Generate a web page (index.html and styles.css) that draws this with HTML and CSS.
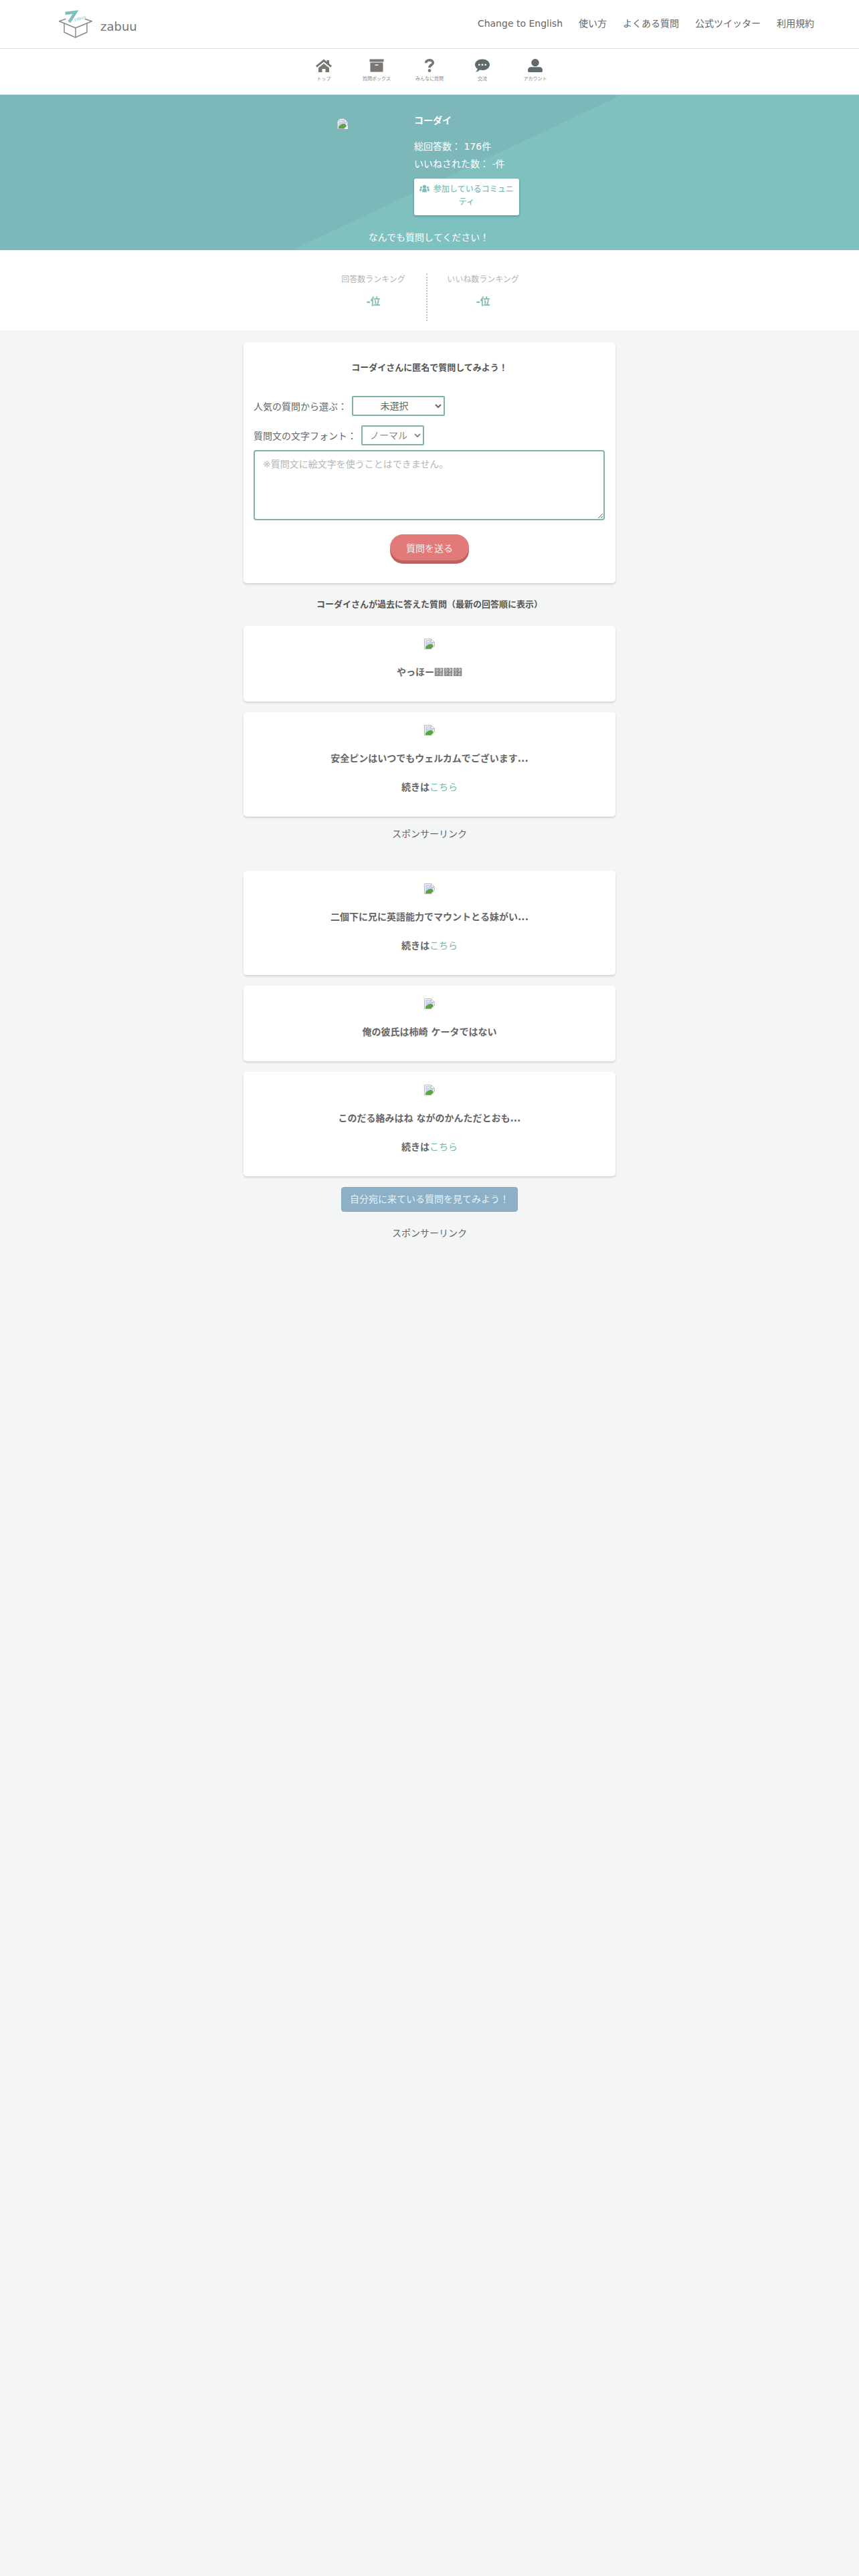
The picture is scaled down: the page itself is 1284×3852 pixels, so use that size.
FILE: index.html
```html
<!DOCTYPE html>
<html lang="ja">
<head>
    <meta charset="UTF-8">
    <meta name="viewport" content="width=device-width, initial-scale=1.0">
    <title>コーダイ | zabuu</title>
    <link rel="stylesheet" href="styles.css">
</head>
<body>
    <svg class="sprite" width="0" height="0">
        <symbol id="broken" viewBox="0 0 16 16">
            <path d="M0.5 0.5H10.5L15.5 5.5V15.5H0.5Z" fill="#fff" stroke="#bbb"/>
            <path d="M2 2H10V6H14V14H2Z" fill="#c9d5f0"/>
            <path d="M2 15V12.5C5 8.5 9 7.5 11 8L14 11L10.5 15Z" fill="#5aa63c"/>
            <path d="M4 5C5 3.6 7 3.6 8 5Z" fill="#fff"/>
            <path d="M10.5 0.5V5.5H15.5" fill="none" stroke="#bbb"/>
            <path d="M11 16L16 11V16Z" fill="#fff"/>
        </symbol>
    </svg>

    <header class="header">
        <a class="logo">
            <svg class="logo-mark" viewBox="0 0 50 44">
                <path d="M9.5 5L25 3L15.5 18" fill="none" stroke="#7cc0ba" stroke-width="4.5"/>
                <text x="23.5" y="17" class="logo-small" transform="rotate(-18 23.5 17)">zabuu</text>
                <path d="M10.3 13.3L0.5 16.7L25 26.7L49.3 16.7L38.7 13.3M8 20V33.3L24.7 41L42 33.3V20M25 26.7V41" fill="none" stroke="#8a8a8a" stroke-width="1.5" stroke-linejoin="round"/>
            </svg>
            <span class="logo-text">zabuu</span>
        </a>
        <nav class="header-links">
            <a>Change to English</a>
            <a>使い方</a>
            <a>よくある質問</a>
            <a>公式ツイッター</a>
            <a>利用規約</a>
        </nav>
    </header>

    <nav class="icon-nav">
        <a class="icon-item">
            <svg class="icon-svg" viewBox="0 0 24 20"><path fill="#7a7672" d="M12 0.5L0 10.5L1.8 12.8L12 4.6L22.2 12.8L24 10.5L20 7.2V2H16.5V4.3Z"/><path fill="#7a7672" d="M4 13.6L12 7L20 13.6V20H14.5V15H9.5V20H4Z"/></svg>
            <span>トップ</span>
        </a>
        <a class="icon-item">
            <svg class="icon-svg" viewBox="0 0 24 20"><path fill="#7a7672" d="M1.5 0.5H22.5V4.5H1.5ZM2.5 5.5H21.5V19.5H2.5Z"/><rect x="9.5" y="8.5" width="5" height="1.5" fill="#fff"/></svg>
            <span>質問ボックス</span>
        </a>
        <a class="icon-item">
            <svg class="icon-svg" viewBox="0 0 24 20"><path fill="none" stroke="#7a7672" stroke-width="3.8" d="M6.8 6.2C6.8 3.4 9 1.9 12 1.9C15 1.9 17.2 3.4 17.2 5.9C17.2 9.2 12 9.2 12 13.2"/><circle cx="12" cy="17.6" r="2.4" fill="#7a7672"/></svg>
            <span>みんなに質問</span>
        </a>
        <a class="icon-item">
            <svg class="icon-svg" viewBox="0 0 24 20"><path fill="#5f6a6e" d="M12 0.5C18 0.5 23 4 23 8.7C23 13.4 18 17 12 17C10.8 17 9.6 16.8 8.6 16.5C7 18 4.6 19.5 2 19.5C3.6 18 4.6 16.2 4.8 15C2.5 13.4 1 11.2 1 8.7C1 4 6 0.5 12 0.5Z"/><circle cx="7.3" cy="8.8" r="1.4" fill="#fff"/><circle cx="12" cy="8.8" r="1.4" fill="#fff"/><circle cx="16.7" cy="8.8" r="1.4" fill="#fff"/></svg>
            <span>交流</span>
        </a>
        <a class="icon-item">
            <svg class="icon-svg" viewBox="0 0 24 20"><circle cx="12" cy="5.7" r="5.7" fill="#5f6a6e"/><path fill="#5f6a6e" d="M5.5 12.2H18.5C21 12.2 23 14.2 23 16.7V18C23 19 22.2 20 21 20H3C1.8 20 1 19 1 18V16.7C1 14.2 3 12.2 5.5 12.2Z"/></svg>
            <span>アカウント</span>
        </a>
    </nav>

    <section class="hero">
        <div class="hero-inner">
            <svg class="hero-avatar"><use href="#broken"/></svg>
            <div class="hero-info">
                <div class="hero-name">コーダイ</div>
                <div class="hero-stats">
                    <p>総回答数： 176件</p>
                    <p>いいねされた数： -件</p>
                </div>
                <a class="community-btn">
                    <svg class="community-icon" viewBox="0 0 16 13">
                        <circle cx="8" cy="3.4" r="2.8" fill="#7fbdb8"/>
                        <path fill="#7fbdb8" d="M4.4 12.5V9.2C4.4 7.6 5.6 6.6 7 6.6H9C10.4 6.6 11.6 7.6 11.6 9.2V12.5Z"/>
                        <circle cx="2.6" cy="4.6" r="1.7" fill="#7fbdb8"/>
                        <circle cx="13.4" cy="4.6" r="1.7" fill="#7fbdb8"/>
                        <path fill="#7fbdb8" d="M0 10.5V8.6C0 7.4 0.8 6.8 2 6.8H3.6C3.2 7.4 3.2 8.2 3.2 9.2V10.5ZM16 10.5V8.6C16 7.4 15.2 6.8 14 6.8H12.4C12.8 7.4 12.8 8.2 12.8 9.2V10.5Z"/>
                    </svg>
                    参加しているコミュニティ
                </a>
            </div>
        </div>
        <p class="hero-message">なんでも質問してください！</p>
    </section>

    <section class="ranking">
        <div class="rank-col rank-col-left">
            <div class="rank-label">回答数ランキング</div>
            <div class="rank-value">-位</div>
        </div>
        <div class="rank-divider"></div>
        <div class="rank-col rank-col-right">
            <div class="rank-label">いいね数ランキング</div>
            <div class="rank-value">-位</div>
        </div>
    </section>

    <main class="main">
        <form class="card ask-card">
            <div class="ask-title">コーダイさんに匿名で質問してみよう！</div>
            <div class="ask-row">
                <label>人気の質問から選ぶ：</label>
                <select class="ask-select popular-select"><option>未選択</option></select>
            </div>
            <div class="ask-row">
                <label>質問文の文字フォント：</label>
                <select class="ask-select font-select"><option>ノーマル</option></select>
            </div>
            <textarea class="ask-text" placeholder="※質問文に絵文字を使うことはできません。"></textarea>
            <button type="button" class="send-btn">質問を送る</button>
        </form>

        <h2 class="answers-title">コーダイさんが過去に答えた質問（最新の回答順に表示）</h2>

        <div class="card answer-card">
            <svg class="answer-img"><use href="#broken"/></svg>
            <p class="answer-text">やっほー<span class="tofu">&#x378;&#x378;&#x378;</span></p>
        </div>
        <div class="card answer-card">
            <svg class="answer-img"><use href="#broken"/></svg>
            <p class="answer-text">安全ピンはいつでもウェルカムでございます...</p>
            <p class="answer-more">続きは<a>こちら</a></p>
        </div>

        <div class="sponsor sponsor-first">スポンサーリンク</div>

        <div class="card answer-card">
            <svg class="answer-img"><use href="#broken"/></svg>
            <p class="answer-text">二個下に兄に英語能力でマウントとる妹がい...</p>
            <p class="answer-more">続きは<a>こちら</a></p>
        </div>
        <div class="card answer-card">
            <svg class="answer-img"><use href="#broken"/></svg>
            <p class="answer-text">俺の彼氏は柿崎 ケータではない</p>
        </div>
        <div class="card answer-card">
            <svg class="answer-img"><use href="#broken"/></svg>
            <p class="answer-text">このだる絡みはね ながのかんただとおも...</p>
            <p class="answer-more">続きは<a>こちら</a></p>
        </div>

        <a class="inbox-btn">自分宛に来ている質問を見てみよう！</a>
        <div class="sponsor">スポンサーリンク</div>
    </main>
</body>
</html>
```

FILE: styles.css
```css
* {
    margin: 0;
    padding: 0;
    box-sizing: border-box;
}
body {
    background: #f4f6f6;
    color: #666;
    font-family: "DejaVu Sans", "Noto Sans CJK JP", sans-serif;
    font-size: 14px;
}
.sprite {
    position: absolute;
}

/* header */
.header {
    display: flex;
    justify-content: space-between;
    align-items: center;
    height: 73px;
    padding: 0 67px 0 88px;
    background: #fff;
    border-bottom: 1px solid #ddd;
}
.logo {
    display: flex;
    align-items: center;
}
.logo-mark {
    width: 50px;
    height: 44px;
    margin-top: 2px;
}
.logo-small {
    font-size: 6px;
    fill: #7cc0ba;
}
.logo-text {
    margin: 6px 0 0 12px;
    font-size: 18px;
    color: #777;
}
.header-links {
    display: flex;
    gap: 24px;
    margin-top: -2px;
    line-height: 20px;
}
.header-links a {
    height: 20px;
}

/* icon nav */
.icon-nav {
    display: flex;
    justify-content: center;
    height: 69px;
    padding: 15px 0 0 0;
    background: #fff;
    border-bottom: 1px solid #cfdcdc;
}
.icon-item {
    display: flex;
    flex-direction: column;
    align-items: center;
    width: 79px;
    font-size: 7px;
    color: #888;
}
.icon-svg {
    width: 24px;
    height: 20px;
    margin-bottom: 4px;
}

/* profile */
.hero {
    height: 232px;
    padding-top: 28px;
    color: #fff;
    background: linear-gradient(154.8deg, #7cb8b9 52.3%, #7ec1bf 52.3%);
}
.hero-inner {
    display: flex;
    width: 556px;
    margin: 0 auto;
    padding-left: 140px;
}
.hero-avatar {
    width: 16px;
    height: 16px;
    margin: 7px 99px 0 0;
    border-radius: 50% 50% 0 0;
}
.hero-name {
    font-size: 14px;
    font-weight: bold;
    line-height: 20px;
}
.hero-stats {
    margin-top: 16px;
    line-height: 26px;
}
.community-btn {
    display: block;
    width: 157px;
    height: 55px;
    margin-top: 9px;
    padding: 7px 7px 0;
    color: #7fbdb8;
    background: #fff;
    border-radius: 3px;
    box-shadow: 0 1px 3px rgba(0,0,0,0.35);
    font-size: 12px;
    font-weight: 500;
    line-height: 19px;
    text-align: center;
}
.community-icon {
    width: 15px;
    height: 12px;
    margin-right: 2px;
    vertical-align: -1px;
}
.hero-message {
    margin-top: 21px;
    line-height: 24px;
    text-align: center;
    padding-right: 2px;
}

/* ranking */
.ranking {
    display: flex;
    justify-content: center;
    height: 120px;
    padding-top: 35px;
    background: #fff;
}
.rank-col {
    text-align: center;
}
.rank-col-left {
    width: 158px;
}
.rank-col-right {
    width: 166px;
}
.rank-divider {
    width: 2px;
    height: 71px;
    border-left: 2px dotted #c8c8c8;
}
.rank-label {
    font-size: 12px;
    line-height: 18px;
    color: #b5b5b5;
}
.rank-value {
    margin-top: 13px;
    font-size: 15px;
    font-weight: bold;
    line-height: 22px;
    color: #7fbdb8;
}

/* main column */
.main {
    width: 556px;
    margin: 0 auto;
    padding-top: 18px;
}
.card {
    background: #fff;
    border-radius: 5px;
    box-shadow: 0 2px 3px rgba(0,0,0,0.14);
}
.ask-card {
    height: 360px;
    padding: 28px 15px 0;
}
.ask-title {
    font-size: 13px;
    font-weight: bold;
    line-height: 20px;
    text-align: center;
    color: #555;
}
.ask-row {
    display: flex;
    align-items: center;
    gap: 7px;
    height: 30px;
    margin-bottom: 14px;
}
.ask-title + .ask-row {
    margin-top: 32px;
}
.ask-select {
    height: 30px;
    border: 2px solid #7db3ac;
    border-radius: 2px;
    background: #fff;
    color: #666;
    font-family: inherit;
    font-size: 14px;
    text-align: center;
}
.popular-select {
    width: 139px;
}
.font-select {
    width: 94px;
    color: #888;
}
.ask-text {
    display: block;
    width: 525px;
    height: 105px;
    margin-top: -7px;
    padding: 8px 12px;
    border: 2px solid #7db3ac;
    border-radius: 4px;
    color: #666;
    font-family: inherit;
    font-size: 14px;
}
.ask-text::placeholder {
    color: #b5b5b5;
}
.send-btn {
    display: block;
    width: 118px;
    height: 39px;
    margin: 21px auto 0;
    border: none;
    border-radius: 20px;
    background: #e27a7a;
    box-shadow: 0 5px 0 #bd6262;
    color: #fdeeee;
    font-family: inherit;
    font-size: 14px;
}
.answers-title {
    margin: 22px 0;
    font-size: 13px;
    font-weight: bold;
    line-height: 20px;
    text-align: center;
    color: #555;
}
.answer-card {
    height: auto;
    padding: 19px 0 34px;
    margin-bottom: 16px;
    text-align: center;
    font-weight: bold;
    color: #666;
}
.answer-img {
    display: block;
    width: 16px;
    height: 16px;
    margin: 0 auto 24px;
}
.answer-text {
    line-height: 20px;
}
.tofu {
    font-family: "Noto Sans", sans-serif;
    font-weight: normal;
    color: #888;
}
.answer-more {
    margin-top: 23px;
    line-height: 20px;
}
.answer-more a {
    color: #6fbcae;
    font-weight: normal;
}
.sponsor {
    line-height: 20px;
    text-align: center;
    color: #666;
}
.sponsor-first {
    margin: 1px 0 45px;
}
.inbox-btn {
    display: block;
    width: 264px;
    height: 37px;
    margin: 0 auto 22px;
    border: 1px solid #7fa8c0;
    border-radius: 4px;
    background: #8bb0c8;
    color: #e9f3f7;
    line-height: 35px;
    text-align: center;
}
```
